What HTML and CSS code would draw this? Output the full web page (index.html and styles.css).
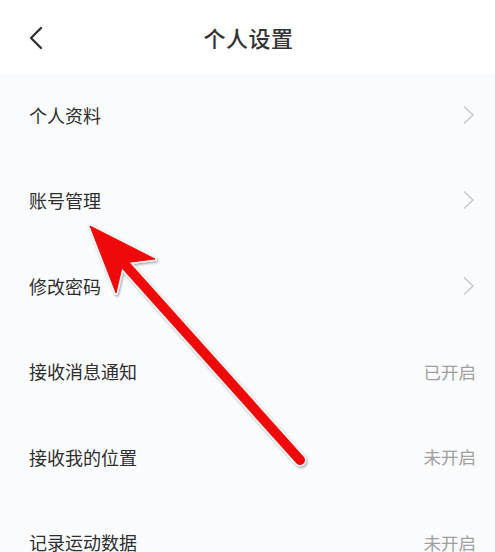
FILE: index.html
```html
<!doctype html>
<html lang="zh-CN">
<head>
  <meta charset="UTF-8"/>
  <meta content="width=device-width, initial-scale=1" name="viewport">
  <title>个人设置</title>
  <link rel="stylesheet" href="styles.css">
</head>
<body>
<div class="page">
  <header class="nav">
    <svg class="back" width="16" height="24" viewBox="0 0 16 24">
      <path d="M13 2 L3 12 L13 22" fill="none" stroke="#333" stroke-width="2.4" stroke-linecap="round" stroke-linejoin="round"/>
    </svg>
    <h1 class="title">个人设置</h1>
  </header>

  <ul class="settings">
    <li class="row">
      <span class="label">个人资料</span>
      <svg class="chev" width="14" height="20" viewBox="0 0 14 20"><path d="M2 1.5 L11 10 L2 18.5" fill="none" stroke="#c8c8cc" stroke-width="1.5"/></svg>
    </li>
    <li class="row">
      <span class="label">账号管理</span>
      <svg class="chev" width="14" height="20" viewBox="0 0 14 20"><path d="M2 1.5 L11 10 L2 18.5" fill="none" stroke="#c8c8cc" stroke-width="1.5"/></svg>
    </li>
    <li class="row">
      <span class="label">修改密码</span>
      <svg class="chev" width="14" height="20" viewBox="0 0 14 20"><path d="M2 1.5 L11 10 L2 18.5" fill="none" stroke="#c8c8cc" stroke-width="1.5"/></svg>
    </li>
    <li class="row">
      <span class="label">接收消息通知</span>
      <span class="value">已开启</span>
    </li>
    <li class="row">
      <span class="label">接收我的位置</span>
      <span class="value">未开启</span>
    </li>
    <li class="row">
      <span class="label">记录运动数据</span>
      <span class="value">未开启</span>
    </li>
  </ul>

  <!-- annotation arrow drawn over the list -->
  <svg class="arrow" width="495" height="552" viewBox="0 0 495 552">
    <defs>
      <filter id="shade" x="-20%" y="-20%" width="140%" height="140%">
        <feDropShadow dx="1" dy="1.5" stdDeviation="1.2" flood-color="#000" flood-opacity="0.35"/>
      </filter>
    </defs>
    <g filter="url(#shade)">
      <line x1="120" y1="259" x2="300" y2="460" stroke="#f4f4f4" stroke-width="13" stroke-linecap="round"/>
      <polygon points="90,226 155,259 123,263 116,293" fill="#f4f4f4" stroke="#f4f4f4" stroke-width="4" stroke-linejoin="round"/>
    </g>
    <line x1="120" y1="259" x2="300" y2="460" stroke="#ee0a0a" stroke-width="10" stroke-linecap="round"/>
    <polygon points="90,226 155,259 123,263 116,293" fill="#ee0a0a" stroke="#ee0a0a" stroke-width="1" stroke-linejoin="round"/>
  </svg>
</div>
</body>
</html>
```

FILE: styles.css
```css
*, *:before {
  box-sizing: border-box;
}

body {
  margin: 0;
  background: #fff;
  font-family: "Noto Sans CJK SC", "Noto Sans", sans-serif;
  color: #333;
}

.page {
  position: relative;
  width: 495px;
  height: 552px;
  overflow: hidden;
}

.nav {
  height: 74px;
  display: flex;
  align-items: center;
  justify-content: center;
  position: relative;
  background: #fff;
}

.nav .back {
  position: absolute;
  left: 28px;
  top: 26px;
}

.nav .title {
  margin: 0 0 0 2px;
  font-size: 22px;
  font-weight: 500;
  color: #333;
  letter-spacing: 0.5px;
}

.settings {
  list-style: none;
  margin: 0;
  padding: 0;
  background: #fafbfd;
}

.row {
  height: 85.5px;
  display: flex;
  align-items: center;
  justify-content: space-between;
  padding: 0 19px 0 29px;
}

.row .label {
  font-size: 18px;
  color: #2e2e2e;
  margin-top: -4px;
}

.row .value {
  font-size: 17.5px;
  color: #a0a0a0;
  margin-top: -4px;
}

.row .chev {
  margin-top: -4px;
}

.arrow {
  position: absolute;
  left: 0;
  top: 0;
  pointer-events: none;
}
```
